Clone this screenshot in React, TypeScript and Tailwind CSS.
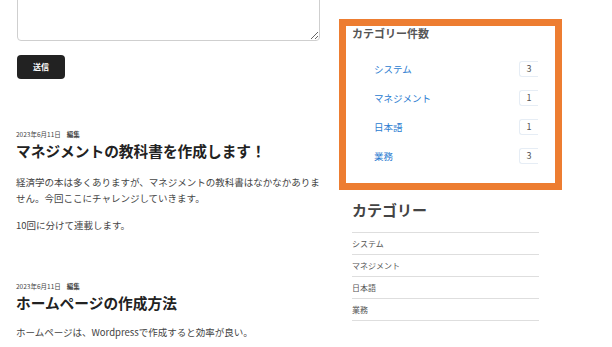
const font = { fontFamily: '"Noto Sans CJK JP", "Noto Sans", sans-serif' }

const counts = [
  { name: 'システム', n: 3 },
  { name: 'マネジメント', n: 1 },
  { name: '日本語', n: 1 },
  { name: '業務', n: 3 },
]

function PostMeta() {
  return (
    <p className="flex gap-[6px] text-[6.5px] leading-[8px] text-[#444]">
      <span>2023年6月11日</span>
      <span className="font-bold">編集</span>
    </p>
  )
}

export default function App() {
  return (
    <div className="flex h-[347px] w-[612px] overflow-hidden bg-white" style={font}>
      {/* Main column */}
      <main className="w-[339px] shrink-0 pl-4 pr-[17px]">
        <textarea className="-mt-[20px] ml-px block h-[61px] w-[303px] rounded-sm border border-[#cfcfcf] bg-white" />
        <button className="ml-px mt-[14px] block h-[24px] w-[48px] rounded-sm bg-[#222] text-[8px] font-bold text-white">
          送信
        </button>

        <article className="mt-[51px]">
          <PostMeta />
          <h2 className="mt-[3px] text-[14.7px] font-bold leading-[20px] text-[#222]">
            マネジメントの教科書を作成します！
          </h2>
          <p className="mt-[13px] text-[9.5px] leading-[16px] text-[#444]">
            経済学の本は多くありますが、マネジメントの教科書はなかなかありません。今回ここにチャレンジしていきます。
          </p>
          <p className="mt-[11px] text-[9.5px] leading-[16px] text-[#444]">10回に分けて連載します。</p>
        </article>

        <article className="mt-[49px]">
          <PostMeta />
          <h2 className="mt-[3px] text-[14.7px] font-bold leading-[20px] text-[#222]">ホームページの作成方法</h2>
          <p className="mt-[11px] text-[9.5px] leading-[16px] text-[#444]">
            ホームページは、Wordpressで作成すると効率が良い。
          </p>
        </article>
      </main>

      {/* Sidebar */}
      <aside className="w-[223px] shrink-0">
        <section className="mt-[19px] border-[7px] border-[#ed7d31] bg-white pb-[19px] pl-[6px]">
          <h3 className="text-[11px] font-bold leading-[14px] text-[#555]">カテゴリー件数</h3>
          <ul className="mt-[21px] flex flex-col gap-[13px] pl-[22px] pr-[17px]">
            {counts.map((c) => (
              <li key={c.name} className="flex h-[16px] items-center justify-between">
                <span className="text-[9.5px] text-[#2a7bd0]">{c.name}</span>
                <span className="flex h-[16px] w-[19px] items-center justify-center rounded-l-[3px] border border-r-0 border-[#e6edf5] text-[9px] text-[#555]">
                  {c.n}
                </span>
              </li>
            ))}
          </ul>
        </section>

        <section className="ml-[13px] mt-[10px] w-[187px]">
          <h3 className="text-[15px] font-bold leading-[20px] text-[#444]">カテゴリー</h3>
          <ul className="mt-[12px] border-t border-[#dedede]">
            {counts.map((c) => (
              <li
                key={c.name}
                className="flex h-[22px] items-center border-b border-[#dedede] text-[8px] text-[#555]"
              >
                {c.name}
              </li>
            ))}
          </ul>
        </section>
      </aside>
    </div>
  )
}
